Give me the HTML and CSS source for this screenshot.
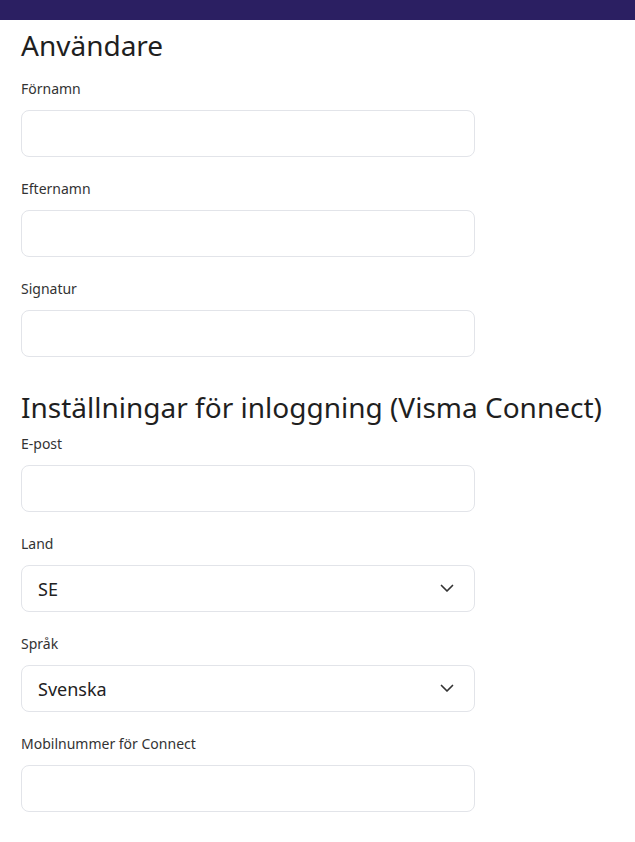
FILE: index.html
```html
<!DOCTYPE html>
<html lang="sv">
<head>
<meta charset="utf-8">
<title>Användare</title>
<link rel="stylesheet" href="styles.css">
</head>
<body>
<div class="topbar"></div>
<main class="page">
  <h2 class="section-title">Användare</h2>
  <div class="field">
    <label class="field-label">Förnamn</label>
    <div class="control"></div>
  </div>
  <div class="field">
    <label class="field-label">Efternamn</label>
    <div class="control"></div>
  </div>
  <div class="field">
    <label class="field-label">Signatur</label>
    <div class="control"></div>
  </div>

  <h2 class="section-title second">Inställningar för inloggning (Visma Connect)</h2>
  <div class="field">
    <label class="field-label">E-post</label>
    <div class="control"></div>
  </div>
  <div class="field">
    <label class="field-label">Land</label>
    <div class="control select"><span class="value">SE</span>
      <svg class="chevron" width="14" height="9" viewBox="0 0 14 9"><polyline points="1.5,1.5 7,7 12.5,1.5" fill="none" stroke="#333" stroke-width="1.7" stroke-linecap="round" stroke-linejoin="round"/></svg>
    </div>
  </div>
  <div class="field">
    <label class="field-label">Språk</label>
    <div class="control select"><span class="value">Svenska</span>
      <svg class="chevron" width="14" height="9" viewBox="0 0 14 9"><polyline points="1.5,1.5 7,7 12.5,1.5" fill="none" stroke="#333" stroke-width="1.7" stroke-linecap="round" stroke-linejoin="round"/></svg>
    </div>
  </div>
  <div class="field">
    <label class="field-label">Mobilnummer för Connect</label>
    <div class="control"></div>
  </div>
</main>
</body>
</html>
```
FILE: styles.css
```css
html, body {
  margin: 0;
  padding: 0;
  background: #ffffff;
}
body {
  font-family: "Noto Sans", "Open Sans", sans-serif;
  color: #222;
}
.topbar {
  height: 20px;
  background: #2b1f62;
}
.page {
  padding: 0 0 0 21px;
}
.section-title {
  margin: 0;
  font-weight: 400;
  font-size: 28px;
  line-height: 34px;
  color: #1f1f1f;
  padding-top: 8px;
  white-space: nowrap;
}
.section-title.second {
  padding-top: 33px;
}
.field {
  display: flex;
  flex-direction: column;
  gap: 11px;
  width: 454px;
}
.section-title + .field {
  margin-top: 17px;
}
.section-title.second + .field {
  margin-top: 10px;
}
.field + .field {
  margin-top: 22px;
}
.field-label {
  font-size: 14px;
  line-height: 20px;
  color: #333;
}
.control {
  box-sizing: border-box;
  height: 47px;
  border: 1.5px solid #e2e4e9;
  border-radius: 8px;
  background: #fff;
}
.select {
  display: flex;
  align-items: center;
  justify-content: space-between;
  padding: 0 20px 0 16px;
}
.value {
  font-size: 18px;
  color: #222;
}
.chevron {
  display: block;
  margin-top: -1px;
}
```
